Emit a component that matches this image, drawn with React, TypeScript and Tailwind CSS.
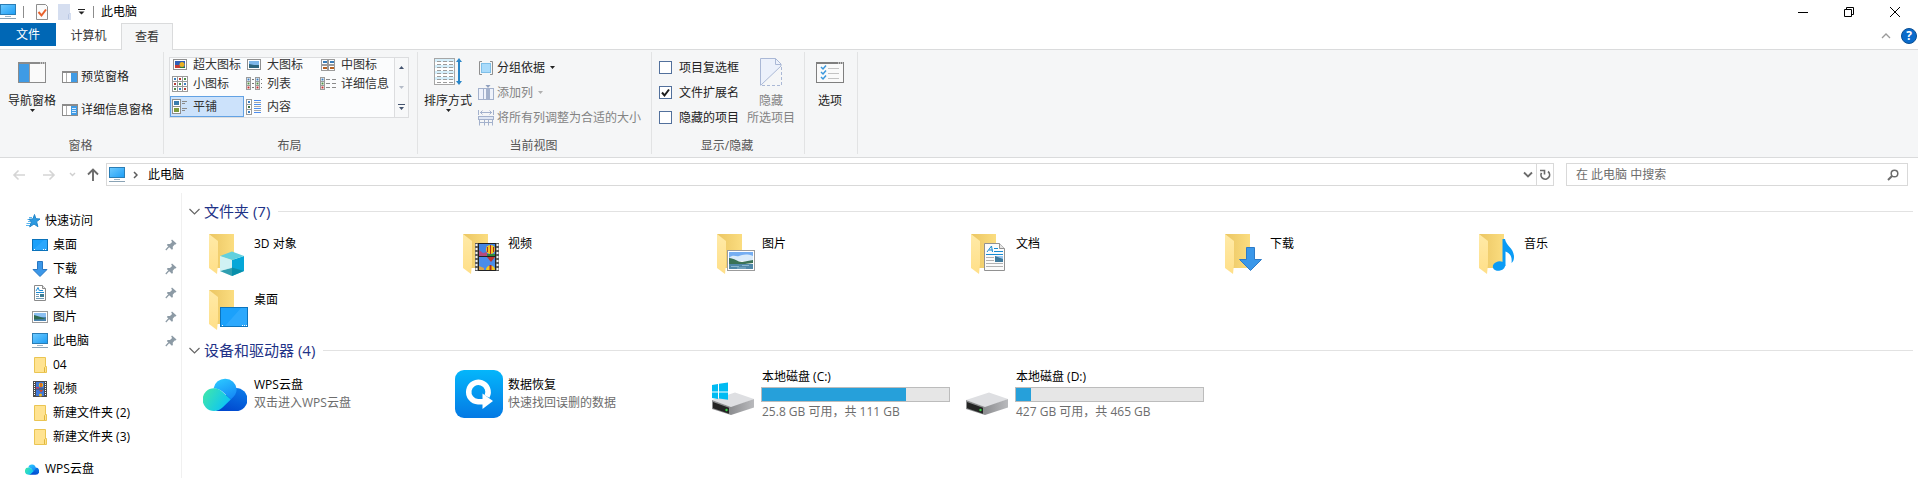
import { useState } from "react";
import type { ReactNode } from "react";

type IconProps = { className?: string };

/* ---------- icons ---------- */

function ComputerIcon({ className = "w-4 h-4" }: IconProps) {
  return (
    <svg viewBox="0 0 16 16" className={`shrink-0 ${className}`}>
      <defs>
        <linearGradient id="screen" x1="0" y1="0" x2="1" y2="1">
          <stop offset="0" stopColor="#6fcbff" />
          <stop offset="1" stopColor="#1c9df5" />
        </linearGradient>
      </defs>
      <rect x="0.5" y="0.5" width="15" height="10" fill="url(#screen)" stroke="#2a7db5" />
      <rect x="5" y="12" width="6" height="1" fill="#9db4c5" />
      <rect x="0" y="14" width="16" height="1" fill="#8aa3b5" />
    </svg>
  );
}

function DesktopIcon({ className = "w-4 h-4" }: IconProps) {
  return (
    <svg viewBox="0 0 16 16" className={`shrink-0 ${className}`}>
      <rect x="0.5" y="2.5" width="15" height="11" fill="#1ba1fb" stroke="#0b72ba" />
      <path d="M1 13L12 3h3v10z" fill="#3aaeff" opacity="0.5" />
      <path d="M2 12.5h1M11 12.5h1M13 12.5h1" stroke="#fff" />
    </svg>
  );
}

function DownloadIcon({ className = "w-4 h-4" }: IconProps) {
  return (
    <svg viewBox="0 0 16 16" className={`shrink-0 ${className}`}>
      <path d="M5.5 0.5h5v8h4.5L8 15.5 1 8.5h4.5z" fill="#3b97e8" stroke="#2877c2" />
    </svg>
  );
}

function DocumentIcon({ className = "w-4 h-4" }: IconProps) {
  return (
    <svg viewBox="0 0 16 16" className={`shrink-0 ${className}`}>
      <path d="M2.5 0.5h8l3 3v12h-11z" fill="#fff" stroke="#8a8a8a" />
      <path d="M10.5 0.5v3h3" fill="#e8e8e8" stroke="#8a8a8a" />
      <path d="M4 6l2-3.5L7.5 6M8 5.5h3M4 7.5h8" fill="none" stroke="#1a8ad4" />
      <path d="M4 9.5h3M4 11.5h3M4 13.5h8" stroke="#6e9cb8" />
      <rect x="8" y="9" width="4" height="3" fill="#3e7c93" />
    </svg>
  );
}

function PictureIcon({ className = "w-4 h-4" }: IconProps) {
  return (
    <svg viewBox="0 0 16 16" className={`shrink-0 ${className}`}>
      <rect x="0.5" y="2.5" width="15" height="11" fill="#fff" stroke="#9a9a9a" />
      <rect x="2" y="4" width="12" height="4" fill="#8cc0f2" />
      <rect x="2" y="8" width="12" height="4" fill="#4a83b0" />
      <path d="M2 6l5 1.5 7 2.5-12 .5z" fill="#2f6b52" />
    </svg>
  );
}

function VideoIcon({ className = "w-4 h-4" }: IconProps) {
  return (
    <svg viewBox="0 0 16 16" className={`shrink-0 ${className}`}>
      <rect x="1" y="0" width="14" height="16" fill="#4b4b4b" />
      <path d="M2.5 1v14M13.5 1v14" stroke="#fff" strokeDasharray="1 1" />
      <rect x="4" y="1" width="8" height="6.5" fill="#3f78d8" />
      <rect x="4" y="8.5" width="8" height="6.5" fill="#3f78d8" />
      <circle cx="9" cy="4" r="2.2" fill="#f0b81f" />
      <path d="M9 2v4.5" stroke="#c32222" />
      <path d="M4 6h3v1.5H4z" fill="#bf3f6c" />
      <path d="M7 9h4l-2 2.5z" fill="#d3482a" />
      <circle cx="8.5" cy="14" r="1.5" fill="#f0b81f" />
    </svg>
  );
}

function SmallFolderIcon({ className = "w-4 h-4" }: IconProps) {
  return (
    <svg viewBox="0 0 16 16" className={`shrink-0 ${className}`}>
      <path d="M2.5 0.5h11v9h1v6h-12z" fill="#ffe391" stroke="#eac553" />
      <path d="M12.5 15V10.5l1-1" fill="none" stroke="#e0b63c" />
    </svg>
  );
}

function StarIcon() {
  return (
    <svg viewBox="0 0 16 16" className="w-4 h-4 shrink-0">
      <path d="M3 4.5h3M1.5 6.5h3M2 8.5h3M0.5 10.5h4M0 12.5h4" stroke="#58b4ee" />
      <path
        d="M8.5 1.5l1.3 4.2 4.2.3-3.4 2.7 1.3 5-3.9-2.7-4.3 2.9 1.7-5-2.4-2.7 4-.3z"
        fill="#2b9ae2"
        stroke="#1f84c9"
      />
    </svg>
  );
}

function PinIcon() {
  return (
    <svg viewBox="0 0 12 12" className="w-3 h-3 shrink-0">
      <path d="M7 .5l4.5 4-1 1-.8-.1-2 2.3.2 2.3-1 .8L1.8 6l.9-1 2.3.1 2.1-2-.9-1.6z" fill="#8c9aa5" />
      <path d="M4 7.5L.8 11" stroke="#8c9aa5" strokeWidth="1.2" />
    </svg>
  );
}

function CloudIcon({ className = "w-11 h-[33px]" }: IconProps) {
  return (
    <svg viewBox="0 0 44 33" className={`shrink-0 ${className}`}>
      <defs>
        <linearGradient id="cloudLeft" x1="0" y1="0.2" x2="1" y2="0.7">
          <stop offset="0" stopColor="#3fe6ac" />
          <stop offset="1" stopColor="#08c1fb" />
        </linearGradient>
        <linearGradient id="cloudTop" x1="0.3" y1="0" x2="0.8" y2="1">
          <stop offset="0" stopColor="#2bc6ff" />
          <stop offset="1" stopColor="#1487f6" />
        </linearGradient>
        <linearGradient id="cloudRight" x1="0.8" y1="0" x2="0.4" y2="1">
          <stop offset="0" stopColor="#0b7be9" />
          <stop offset="1" stopColor="#0049cf" />
        </linearGradient>
      </defs>
      <path d="M33 10a11.5 11.5 0 010 23H13l12-20c2-2 5-3 8-3z" fill="url(#cloudRight)" />
      <path d="M10.5 10.5a11.7 11.7 0 0123.2.7c0 4-2.3 7-5.7 10.1l-9-8c-2-1.8-5-2.9-8.5-2.8z" fill="url(#cloudTop)" />
      <path d="M11 10.3c3.5 0 6 1.3 8 3.2l8.8 8-8 7.8c-2.4 2.4-5 3.7-8.8 3.7a11.3 11.3 0 010-22.7z" fill="url(#cloudLeft)" />
    </svg>
  );
}

function RecoveryIcon() {
  return (
    <svg viewBox="0 0 48 48" className="w-12 h-12">
      <defs>
        <linearGradient id="recovery" x1="0" y1="0" x2="0" y2="1">
          <stop offset="0" stopColor="#04b6fb" />
          <stop offset="1" stopColor="#0479e4" />
        </linearGradient>
      </defs>
      <rect width="48" height="48" rx="9" fill="url(#recovery)" />
      <path d="M32 26.5A9.7 9.7 0 1023 31.7h5" fill="none" stroke="#fff" strokeWidth="5.5" />
      <path d="M27.5 23.5l10.5 7.5-10.5 8z" fill="#fff" />
    </svg>
  );
}

function DriveIcon({ system }: { system?: boolean }) {
  return (
    <svg viewBox="0 5 48 48" className="w-12 h-12">
      <defs>
        <linearGradient id="driveSide" x1="0" y1="0" x2="1" y2="0">
          <stop offset="0" stopColor="#8e8f92" />
          <stop offset="1" stopColor="#b9babd" />
        </linearGradient>
      </defs>
      <path d="M3 35l23-7.5L45 34 23 42.5z" fill="#dedfe2" />
      <path d="M22 42l23-8v8.5L22 50z" fill="url(#driveSide)" />
      <path d="M3 35l19 7v8L3 44z" fill="#8d8e90" />
      <path d="M4 37l16 5.7v6L4 43.3z" fill="#242424" />
      <circle cx="17.5" cy="45" r="1.2" fill="#36d845" />
      {system && (
        <path
          d="M3 20l6-1v7.5H3zM10 18.8l9-1.3v9h-9zM3 27.5h6V34l-6-1zM10 27.5h9v7.3l-9-1.3z"
          fill="#00bbf2"
        />
      )}
    </svg>
  );
}

function FolderIcon({ children }: { children: ReactNode }) {
  return (
    <svg viewBox="0 0 48 48" className="w-12 h-12">
      <defs>
        <linearGradient id="folderBack" x1="0" y1="0" x2="1" y2="0">
          <stop offset="0" stopColor="#ebc663" />
          <stop offset="1" stopColor="#fbdd80" />
        </linearGradient>
        <linearGradient id="folderFront" x1="0" y1="0" x2="0" y2="1">
          <stop offset="0" stopColor="#ffeaa7" />
          <stop offset="1" stopColor="#ffdf88" />
        </linearGradient>
      </defs>
      <path d="M8 3h25v34H14z" fill="url(#folderBack)" />
      <path d="M8 3l9 7v23l-1 10-8-6z" fill="url(#folderFront)" />
      {children}
    </svg>
  );
}

const cubeBadge = (
  <g>
    <path d="M19 25l12 4v16l-12-5z" fill="#c3eff2" />
    <path d="M31 29l12-4v15l-12 5z" fill="#05a7d8" />
    <path d="M19 25l12-4.5L43 25l-12 4z" fill="#62d0de" />
    <path d="M19 40l12-3.5L43 40l-12 5z" fill="#0a8a9f" opacity="0.8" />
    <path d="M31 29v8l-12 3V25z" fill="#d5f3f5" opacity="0.7" />
  </g>
);

const videoBadge = (
  <g>
    <rect x="20" y="12" width="24" height="28" fill="#5b5b5b" />
    <path d="M21.5 13v27M42.5 13v27" stroke="#f4f4f4" strokeWidth="2" strokeDasharray="2 2" />
    <rect x="23" y="12" width="18" height="28" fill="#222" />
    <rect x="24" y="13" width="16" height="12" fill="#4384e2" />
    <rect x="24" y="26" width="16" height="13" fill="#4b8ce9" />
    <path d="M24 19l4 3 4-1v4h-8z" fill="#b54b80" />
    <path d="M32 23h8v2h-8z" fill="#2f8b3d" />
    <circle cx="35.5" cy="18.5" r="4.5" fill="#f4c81f" />
    <path d="M35.5 14v9M32.5 16v5M38.5 16v5" stroke="#b02a22" />
    <path d="M32 26h8l-4 5z" fill="#bf3430" />
    <path d="M31 39c0-6 9-6 9 0z" fill="#f4c81f" />
    <path d="M35.5 34v5" stroke="#b02a22" strokeWidth="2" />
    <path d="M24 35l5 2v2h-5z" fill="#d8a34e" />
  </g>
);

const pictureBadge = (
  <g>
    <rect x="18.5" y="19.5" width="27" height="20" fill="#fff" stroke="#9b9b9b" />
    <rect x="20" y="21" width="24" height="9" fill="#75aef2" />
    <path d="M20 27c4-4 7-1 10-2s7-3 14 0v5H20z" fill="#d9ebfa" />
    <path d="M20 27c5 0 9 4 13 4l11-2v3l-24 3z" fill="#3a7256" />
    <rect x="20" y="33" width="24" height="5" fill="#4f88a9" />
    <path d="M22 35.5h8M33 34.5h7M28 37h9" stroke="#a5cbdc" strokeWidth="0.7" />
  </g>
);

const documentBadge = (
  <g>
    <path d="M21.5 12.5h15l5 5v22h-20z" fill="#fbfbfb" stroke="#919191" />
    <path d="M36.5 12.5v5h5" fill="#e5e5e5" stroke="#919191" />
    <path d="M24 21l4.5-6 1 6M26 19h3.5M31 17.5h4M31 20.5h9" fill="none" stroke="#168bd2" />
    <path d="M23 23.5h17" stroke="#168bd2" />
    <path d="M23 26.5h8M23 29.5h8M23 32.5h17M23 35.5h17" stroke="#b2b2b2" />
    <rect x="32" y="25" width="8" height="6" fill="#3f7a9c" />
    <path d="M32 25h8v3z" fill="#9bc7ee" />
  </g>
);

const downloadBadge = (
  <path d="M29.5 16.5h8v12h7L33.5 39.5 22.5 28.5h7z" fill="#3a97e9" stroke="#2d7bc8" />
);

const musicBadge = (
  <g fill="#0a9bf5">
    <ellipse cx="28" cy="35" rx="6.3" ry="4.7" transform="rotate(-14 28 35)" />
    <path d="M31.5 8H34c1 7 9 9 9 18 0 3-1 5-2.5 6 1-7-2-10-6-11.5V35h-3z" />
  </g>
);

const desktopBadge = (
  <g>
    <rect x="19.5" y="20.5" width="27" height="19" fill="#1ba1fb" stroke="#0c74bd" />
    <path d="M24 39L40 21h6v18z" fill="#3fb1ff" opacity="0.5" />
    <path d="M21 38.5h1M41 38.5h1M43 38.5h1M45 38.5h1" stroke="#fff" />
  </g>
);

function Caret({ color = "#222" }: { color?: string }) {
  return (
    <svg viewBox="0 0 5 3" className="w-[5px] h-[3px] shrink-0">
      <path d="M0 0h5L2.5 3z" fill={color} />
    </svg>
  );
}

function PaneIcon({ kind }: { kind: "preview" | "details" }) {
  return (
    <svg viewBox="0 0 16 12" className="w-4 h-3 shrink-0">
      <rect x="0.5" y="0.5" width="15" height="11" fill="#fff" stroke="#8b8b8b" />
      <rect x="0" y="0" width="16" height="2" fill="#8b8b8b" />
      <path d="M4.5 2v9" stroke="#b0b0b0" />
      <rect x="9" y="2" width="6" height="9" fill="#3f9be5" />
      {kind === "details" && <path d="M10 4.5h4M10 6.5h4M10 8.5h4" stroke="#d4eaff" />}
    </svg>
  );
}

function NavPaneIcon() {
  return (
    <svg viewBox="0 0 28 21" className="w-7 h-[21px]">
      <rect x="0.5" y="0.5" width="27" height="20" fill="#fafafa" stroke="#8b8b8b" />
      <rect x="0" y="0" width="28" height="2" fill="#8b8b8b" />
      <path d="M22 1h1M24 1h1M26 1h1" stroke="#fff" />
      <rect x="1" y="2" width="10" height="18" fill="#3f9be5" />
      <path d="M11.5 2v18" stroke="#9a9a9a" />
    </svg>
  );
}

function SortIcon() {
  return (
    <svg viewBox="0 0 28 28" className="w-7 h-7">
      <rect x="0.5" y="0.5" width="20" height="26" fill="#fff" stroke="#a6a6a6" />
      <path d="M1 2.5h19M1 8.5h19M1 14.5h19M1 20.5h19" stroke="#d5effb" strokeWidth="3" />
      <path
        d="M3 3.5h16M3 6.5h16M3 9.5h16M3 12.5h16M3 15.5h16M3 18.5h16M3 21.5h16M3 24.5h16"
        stroke="#9c9c9c"
        strokeDasharray="4 2"
      />
      <path d="M25 2v23" stroke="#2a86c8" strokeWidth="2" />
      <path d="M22 4l3-4 3 4zM22 23l3 4 3-4z" fill="#2a86c8" />
    </svg>
  );
}

function GroupByIcon() {
  return (
    <svg viewBox="0 0 16 16" className="w-4 h-4 shrink-0">
      <path d="M4 1.5H1.5v13H4M12 1.5h2.5v13H12" fill="none" stroke="#8f8f8f" />
      <rect x="3.5" y="3.5" width="9" height="9" fill="#a9dbfb" stroke="#7fbfe8" />
    </svg>
  );
}

function AddColumnIcon() {
  return (
    <svg viewBox="0 0 16 16" className="w-4 h-4 shrink-0">
      <rect x="0.5" y="3.5" width="15" height="11" fill="#eef2fb" stroke="#a3b1cc" />
      <path d="M5.5 4v10M11.5 4v10" stroke="#a3b1cc" />
      <rect x="8" y="4" width="4" height="10" fill="#a3b1cc" />
      <path d="M7.5 0h5L10 3z" fill="#8fa0bf" />
    </svg>
  );
}

function FitColumnsIcon() {
  return (
    <svg viewBox="0 0 16 16" className="w-4 h-4 shrink-0">
      <path
        d="M0.5 0v5M15.5 0v5M2 2.5h12M4.5 0.5l-2 2 2 2M11.5 0.5l2 2-2 2"
        fill="none"
        stroke="#a3b1cc"
      />
      <rect x="0.5" y="6.5" width="15" height="3" fill="#dfe6f3" stroke="#a3b1cc" />
      <path d="M1.5 9v6.5M6.5 9v6.5M10.5 9v6.5M14.5 9v6.5M1 12.5h14" stroke="#a3b1cc" />
    </svg>
  );
}

function HideIcon() {
  return (
    <svg viewBox="0 0 22 28" className="w-[22px] h-7">
      <path d="M0.5 0.5h15l5.5 5.5v1.5L1 27z" fill="#ecf1fb" />
      <path d="M0.5 27V0.5h15l5.5 5.5v2L0.5 27.5" fill="none" stroke="#aab8d6" />
      <path d="M15.5 0.5v6H21" fill="none" stroke="#aab8d6" />
      <path d="M21.5 9v18.5H1" fill="none" stroke="#aab8d6" strokeDasharray="3 2" />
    </svg>
  );
}

function OptionsIcon() {
  return (
    <svg viewBox="0 0 28 21" className="w-7 h-[21px]">
      <rect x="0.5" y="0.5" width="27" height="20" fill="#fafafa" stroke="#7f7f7f" />
      <rect x="0" y="0" width="28" height="2" fill="#7f7f7f" />
      <path d="M22 1h1M24 1h1M26 1h1" stroke="#fff" />
      <path
        d="M5 5l2 2 3-3.5M5 10l2 2 3-3.5M5 15l2 2 3-3.5"
        fill="none"
        stroke="#3c98dc"
        strokeWidth="1.5"
      />
      <path d="M12 6.5h11M12 11.5h11M12 16.5h11" stroke="#c3c3c3" />
    </svg>
  );
}

type ViewKind = "xlarge" | "large" | "medium" | "small" | "list" | "details" | "tiles" | "content";

function Dot({ x, y, w = 4, color }: { x: number; y: number; w?: number; color: string }) {
  return (
    <g>
      <rect x={x + 0.5} y={y + 0.5} width={w} height={w} fill="#fff" stroke="#9b9b9b" />
      <rect x={x + w / 2 - 0.5} y={y + w / 2 - 0.5} width="2" height="2" fill={color} />
    </g>
  );
}

function ViewIcon({ kind }: { kind: ViewKind }) {
  return (
    <svg viewBox="0 0 16 16" className="w-4 h-4 shrink-0">
      {kind === "xlarge" && (
        <>
          <rect x="1.5" y="2.5" width="13" height="10" fill="#fff" stroke="#8f8f8f" />
          <rect x="3" y="4" width="10" height="7" fill="#2f5fb8" />
          <path d="M3 8h5v3H3z" fill="#c43d35" />
          <circle cx="10" cy="7.5" r="2.5" fill="#e9b022" />
          <path d="M8 10h5v1H8z" fill="#2f7b34" />
        </>
      )}
      {kind === "large" && (
        <>
          <rect x="1.5" y="2.5" width="13" height="10" fill="#fff" stroke="#8f8f8f" />
          <rect x="3" y="4" width="10" height="7" fill="#7db6e8" />
          <path d="M3 7l5 1h5v3H3z" fill="#2e657c" />
        </>
      )}
      {kind === "medium" &&
        [1, 8].map((x) =>
          [2, 8].map((y) => (
            <g key={`${x}-${y}`}>
              <rect x={x + 0.5} y={y + 0.5} width="6" height="5" fill="#fff" stroke="#9b9b9b" />
              <rect x={x + 2} y={y + 2} width="4" height="2" fill={y === 2 ? "#3a7cb8" : "#b76020"} />
            </g>
          ))
        )}
      {kind === "small" &&
        [0, 5, 10].map((x, i) =>
          [0, 5, 10].map((y, j) => (
            <Dot key={`${x}-${y}`} x={x} y={y} w={5} color={["#3c7fc0", "#b43c36", "#4f8d45"][(i + j) % 3]} />
          ))
        )}
      {(kind === "list" || kind === "details") && (
        <>
          <Dot x={0} y={1} color="#3c7fc0" />
          <Dot x={0} y={5} color="#4f8d45" />
          <Dot x={0} y={9} color="#c43131" />
        </>
      )}
      {kind === "list" && (
        <>
          <Dot x={9} y={1} color="#3c7fc0" />
          <Dot x={9} y={5} color="#4f8d45" />
          <Dot x={9} y={9} color="#c43131" />
          <path d="M6 3.5h2M6 7.5h2M6 11.5h2M15 3.5h1M15 7.5h1M15 11.5h1" stroke="#777" />
        </>
      )}
      {kind === "details" && (
        <path d="M6 3.5h4M6 7.5h4M6 11.5h4M12 3.5h4M12 7.5h4M12 11.5h4" stroke="#8a8a8a" />
      )}
      {kind === "tiles" && (
        <>
          <rect x="0.5" y="0.5" width="8" height="7" fill="#fff" stroke="#8f8f8f" />
          <rect x="2" y="2" width="5" height="4" fill="#397cae" />
          <rect x="0.5" y="7.5" width="8" height="7" fill="#fff" stroke="#8f8f8f" />
          <rect x="2" y="9" width="5" height="4" fill="#7d9b3c" />
          <path d="M10 2.5h5M10 4.5h3M10 9.5h5M10 11.5h3" stroke="#8a8a8a" />
        </>
      )}
      {kind === "content" && (
        <>
          <Dot x={0} y={0} w={5} color="#3c7fc0" />
          <Dot x={0} y={5} w={5} color="#39703b" />
          <Dot x={0} y={10} w={5} color="#3c7fc0" />
          <path d="M8 1.5h7M8 5.5h7M8 9.5h7M8 13.5h7" stroke="#4b8df0" />
          <path d="M8 3.5h7M8 7.5h7M8 11.5h7" stroke="#a5a5a5" />
        </>
      )}
    </svg>
  );
}

/* ---------- window chrome ---------- */

function TitleBar() {
  return (
    <header className="flex h-[23px] items-center justify-between">
      <div className="flex items-center">
        <ComputerIcon />
        <span className="ml-[7px] h-3 w-px bg-[#8c8c8c]" />
        <button type="button" aria-label="属性" className="ml-2.5">
          <svg viewBox="0 0 16 16" className="w-4 h-4">
            <path d="M2.5 0.5h9l2 2v13h-11z" fill="#fbfbfb" stroke="#8d8d8d" />
            <path d="M4.5 8l3 3.5 4.5-6" fill="none" stroke="#e8612c" strokeWidth="2" />
          </svg>
        </button>
        <button type="button" aria-label="新建文件夹" className="ml-1.5">
          <svg viewBox="0 0 16 16" className="w-4 h-4">
            <path d="M2 0h12v9h1v7H2z" fill="#d5def0" />
            <path d="M12.5 15V10.5l1-1" fill="none" stroke="#b9c7e2" />
          </svg>
        </button>
        <button type="button" aria-label="自定义快速访问工具栏" className="ml-1.5">
          <svg viewBox="0 0 7 6" className="w-[7px] h-1.5">
            <path d="M0 0h7v1H0zM0.5 2.5h6l-3 3z" fill="#222" />
          </svg>
        </button>
        <span className="ml-2 h-3 w-px bg-[#8c8c8c]" />
        <h1 className="ml-[7px]">此电脑</h1>
      </div>
      <div className="flex items-center gap-[34px] pr-[17px]">
        <button type="button" aria-label="最小化">
          <svg viewBox="0 0 12 12" className="w-3 h-3">
            <path d="M1 6.5h10" stroke="#000" />
          </svg>
        </button>
        <button type="button" aria-label="还原">
          <svg viewBox="0 0 12 12" className="w-3 h-3">
            <path d="M1.5 3.5h7v7h-7zM3.5 3V1.5h7v7H9" fill="none" stroke="#000" />
          </svg>
        </button>
        <button type="button" aria-label="关闭">
          <svg viewBox="0 0 12 12" className="w-3 h-3">
            <path d="M1 1l10 10M11 1L1 11" stroke="#000" />
          </svg>
        </button>
      </div>
    </header>
  );
}

function TabBar() {
  return (
    <nav className="flex h-[27px] items-start border-b border-[#dadbdc]">
      <button type="button" className="h-[23px] w-14 bg-[#0067b5] text-white">
        文件
      </button>
      <button type="button" className="h-[25px] w-[65px] text-[#333]">
        计算机
      </button>
      <button
        type="button"
        className="h-[27px] w-[52px] border border-b-0 border-[#dadbdc] bg-[#f5f6f7] text-[#333]"
      >
        查看
      </button>
      <div className="ml-auto flex items-center gap-2.5 pt-[5px] pr-px">
        <button type="button" aria-label="最小化功能区">
          <svg viewBox="0 0 10 6" className="w-2.5 h-1.5">
            <path d="M1 5l4-4 4 4" fill="none" stroke="#9a9a9a" strokeWidth="1.3" />
          </svg>
        </button>
        <button
          type="button"
          aria-label="帮助"
          className="h-4 w-4 rounded-full border border-[#0a4f93] bg-[#0a6bcb] text-center font-bold leading-[14px] text-white"
        >
          ?
        </button>
      </div>
    </nav>
  );
}

/* ---------- ribbon ---------- */

function RibbonGroup({
  label,
  className,
  children,
}: {
  label?: string;
  className: string;
  children: ReactNode;
}) {
  return (
    <section className={`flex h-[102px] flex-col border-r border-[#e2e3e4] ${className}`}>
      <div className="flex flex-1 items-start">{children}</div>
      <div className="h-4 pr-0.5 text-center leading-4 text-[#555]">{label}</div>
    </section>
  );
}

function LargeButton({
  icon,
  lines,
  caret,
  disabled,
}: {
  icon: ReactNode;
  lines: string[];
  caret?: boolean;
  disabled?: boolean;
}) {
  return (
    <button
      type="button"
      disabled={disabled}
      className={`flex shrink-0 flex-col items-center pt-1.5 ${
        disabled ? "text-[#838383]" : "text-[#222]"
      }`}
    >
      <span className="mb-1.5 flex h-7 items-center">{icon}</span>
      {lines.map((line) => (
        <span key={line} className="leading-[17px]">
          {line}
        </span>
      ))}
      {caret && <Caret />}
    </button>
  );
}

const views: { kind: ViewKind; name: string }[] = [
  { kind: "xlarge", name: "超大图标" },
  { kind: "large", name: "大图标" },
  { kind: "medium", name: "中图标" },
  { kind: "small", name: "小图标" },
  { kind: "list", name: "列表" },
  { kind: "details", name: "详细信息" },
  { kind: "tiles", name: "平铺" },
  { kind: "content", name: "内容" },
];

function ViewGallery() {
  const [selected, setSelected] = useState<ViewKind>("tiles");

  return (
    <div className="mt-[5px] flex border border-[#dcdddf] bg-[#fbfcfd]">
      <div className="grid grid-cols-[74px_74px_76px] grid-rows-[14px_24px_21px]">
        {views.map((view) => (
          <button
            key={view.kind}
            type="button"
            onClick={() => setSelected(view.kind)}
            className={`flex items-center gap-[5px] border pl-px leading-3 whitespace-nowrap text-[#333] ${
              selected === view.kind
                ? "border-[#62a2e4] bg-[#cce2fb]"
                : "border-transparent"
            }`}
          >
            <ViewIcon kind={view.kind} />
            {view.name}
          </button>
        ))}
      </div>
      <div className="flex w-[14px] flex-col border-l border-[#dcdddf] bg-[#f7f8f9]">
        <button type="button" aria-label="上一行" className="flex flex-1 items-center justify-center">
          <svg viewBox="0 0 5 3" className="w-[5px] h-[3px]">
            <path d="M0 3h5L2.5 0z" fill="#44546f" />
          </svg>
        </button>
        <button type="button" aria-label="下一行" className="flex flex-1 items-center justify-center">
          <Caret color="#b5bcc8" />
        </button>
        <button type="button" aria-label="更多" className="flex flex-1 items-center justify-center">
          <svg viewBox="0 0 7 6" className="w-[7px] h-1.5">
            <path d="M0 0h7v1H0zM1 3h5L3.5 6z" fill="#44546f" />
          </svg>
        </button>
      </div>
    </div>
  );
}

function RibbonCheckbox({ label, defaultChecked }: { label: string; defaultChecked?: boolean }) {
  return (
    <label className="flex h-[25px] items-center gap-[7px] whitespace-nowrap text-[#222]">
      <span className="relative h-[13px] w-[13px]">
        <input
          type="checkbox"
          defaultChecked={defaultChecked}
          className="peer block h-[13px] w-[13px] appearance-none border border-[#52709c] bg-white"
        />
        <svg
          viewBox="0 0 13 13"
          className="pointer-events-none absolute inset-0 hidden h-[13px] w-[13px] peer-checked:block"
        >
          <path d="M3 6.5l2.5 3 4.5-6" fill="none" stroke="#1c1c1c" strokeWidth="2" />
        </svg>
      </span>
      {label}
    </label>
  );
}

function Ribbon() {
  return (
    <div className="flex border-b border-[#dadbdc] bg-[#f5f6f7] pt-0.5 pb-[3px]">
      <RibbonGroup label="窗格" className="w-[164px]">
        <div className="flex gap-1.5 pl-2">
          <LargeButton icon={<NavPaneIcon />} lines={["导航窗格"]} caret />
          <div className="pt-2">
            <button type="button" className="flex h-[33px] items-center gap-[3px] text-[#222]">
              <PaneIcon kind="preview" />
              预览窗格
            </button>
            <button type="button" className="flex h-[33px] items-center gap-[3px] text-[#222]">
              <PaneIcon kind="details" />
              详细信息窗格
            </button>
          </div>
        </div>
      </RibbonGroup>

      <RibbonGroup label="布局" className="w-[254px]">
        <div className="pl-[5px]">
          <ViewGallery />
        </div>
      </RibbonGroup>

      <RibbonGroup label="当前视图" className="w-[234px]">
        <div className="flex gap-1.5 pl-1.5">
          <LargeButton icon={<SortIcon />} lines={["排序方式"]} caret />
          <div className="pt-[3px]">
            <button type="button" className="flex h-[25px] items-center gap-[3px] text-[#222]">
              <GroupByIcon />
              分组依据
              <span className="ml-0.5"><Caret /></span>
            </button>
            <button type="button" disabled className="flex h-[25px] items-center gap-[3px] text-[#838383]">
              <AddColumnIcon />
              添加列
              <span className="ml-0.5"><Caret color="#b0b0b0" /></span>
            </button>
            <button type="button" disabled className="flex h-[25px] items-center gap-[3px] text-[#838383]">
              <FitColumnsIcon />
              将所有列调整为合适的大小
            </button>
          </div>
        </div>
      </RibbonGroup>

      <RibbonGroup label="显示/隐藏" className="w-[153px]">
        <div className="flex gap-2 pl-[7px]">
          <div className="pt-[3px]">
            <RibbonCheckbox label="项目复选框" />
            <RibbonCheckbox label="文件扩展名" defaultChecked />
            <RibbonCheckbox label="隐藏的项目" />
          </div>
          <LargeButton icon={<HideIcon />} lines={["隐藏", "所选项目"]} disabled />
        </div>
      </RibbonGroup>

      <RibbonGroup className="w-[53px]">
        <div className="pl-[11px]">
          <LargeButton icon={<OptionsIcon />} lines={["选项"]} />
        </div>
      </RibbonGroup>
    </div>
  );
}

/* ---------- address bar ---------- */

function AddressBar() {
  return (
    <div className="flex items-center pt-[5px] pr-2.5">
      <div className="flex w-[106px] items-center pl-3">
        <button type="button" aria-label="返回" disabled>
          <svg viewBox="0 0 14 12" className="w-3.5 h-3">
            <path d="M13 6H2M6.5 1.5L2 6l4.5 4.5" fill="none" stroke="#d5d5d5" strokeWidth="1.6" />
          </svg>
        </button>
        <button type="button" aria-label="前进" disabled className="ml-4">
          <svg viewBox="0 0 14 12" className="w-3.5 h-3">
            <path d="M1 6h11M7.5 1.5L12 6l-4.5 4.5" fill="none" stroke="#d5d5d5" strokeWidth="1.6" />
          </svg>
        </button>
        <button type="button" aria-label="最近浏览的位置" disabled className="ml-[13px]">
          <svg viewBox="0 0 7 5" className="w-[7px] h-[5px]">
            <path d="M1 1l2.5 2.5L6 1" fill="none" stroke="#cfcfcf" strokeWidth="1.4" />
          </svg>
        </button>
        <button type="button" aria-label="上移" className="ml-2.5">
          <svg viewBox="0 0 14 14" className="w-3.5 h-3.5">
            <path d="M7 13V2M2 6.5l5-5 5 5" fill="none" stroke="#6b6b6b" strokeWidth="1.9" />
          </svg>
        </button>
      </div>
      <div className="flex h-[23px] flex-1 items-center border border-[#d9d9d9] pl-0.5">
        <ComputerIcon />
        <svg viewBox="0 0 5 8" className="ml-2 h-2 w-[5px]">
          <path d="M1 1l3 3-3 3" fill="none" stroke="#5c5c5c" strokeWidth="1.5" />
        </svg>
        <button type="button" className="ml-2.5">此电脑</button>
        <button type="button" aria-label="以前的位置" className="ml-auto mr-[3px]">
          <svg viewBox="0 0 10 7" className="w-2.5 h-[7px]">
            <path d="M1 1.5l4 4 4-4" fill="none" stroke="#6b6b6b" strokeWidth="1.8" />
          </svg>
        </button>
        <button
          type="button"
          aria-label="刷新"
          className="flex h-full w-[17px] items-center justify-center border-l border-[#d9d9d9]"
        >
          <svg viewBox="0 0 12 12" className="w-3 h-3">
            <path d="M9 2.5A4.3 4.3 0 112.5 3.8" fill="none" stroke="#6b6b6b" strokeWidth="1.7" />
            <path d="M1 1.5h4.5v4" fill="none" stroke="#6b6b6b" strokeWidth="1.6" />
          </svg>
        </button>
      </div>
      <div className="ml-3 flex h-[23px] w-[342px] items-center border border-[#d9d9d9] pr-2 pl-[9px]">
        <input
          type="text"
          aria-label="搜索"
          placeholder="在 此电脑 中搜索"
          className="min-w-0 flex-1 bg-transparent outline-none placeholder:text-[#6d6d6d]"
        />
        <svg viewBox="0 0 12 12" className="w-3 h-3">
          <circle cx="7.5" cy="4.5" r="3.3" fill="none" stroke="#6b6b6b" strokeWidth="1.5" />
          <path d="M5 7L1 11" stroke="#6b6b6b" strokeWidth="1.9" />
        </svg>
      </div>
    </div>
  );
}

/* ---------- body ---------- */

const quickAccess: { name: string; icon: ReactNode; pinned?: boolean }[] = [
  { name: "桌面", icon: <DesktopIcon />, pinned: true },
  { name: "下载", icon: <DownloadIcon />, pinned: true },
  { name: "文档", icon: <DocumentIcon />, pinned: true },
  { name: "图片", icon: <PictureIcon />, pinned: true },
  { name: "此电脑", icon: <ComputerIcon />, pinned: true },
  { name: "04", icon: <SmallFolderIcon /> },
  { name: "视频", icon: <VideoIcon /> },
  { name: "新建文件夹 (2)", icon: <SmallFolderIcon /> },
  { name: "新建文件夹 (3)", icon: <SmallFolderIcon /> },
];

function Sidebar() {
  return (
    <aside className="w-[182px] shrink-0 border-r border-[#f0f0f0] pt-4">
      <a href="#quick" className="flex h-6 items-center gap-[3px] pl-[26px]">
        <StarIcon />
        快速访问
      </a>
      <ul>
        {quickAccess.map((item) => (
          <li key={item.name}>
            <a href="#item" className="flex h-6 items-center gap-[5px] pr-1 pl-8">
              {item.icon}
              <span className="flex-1">{item.name}</span>
              {item.pinned && <PinIcon />}
            </a>
          </li>
        ))}
      </ul>
      <a href="#wps" className="mt-2 flex h-6 items-center gap-1.5 pl-[25px]">
        <CloudIcon className="w-3.5 h-[11px]" />
        WPS云盘
      </a>
    </aside>
  );
}

const folders: { name: string; badge: ReactNode }[] = [
  { name: "3D 对象", badge: cubeBadge },
  { name: "视频", badge: videoBadge },
  { name: "图片", badge: pictureBadge },
  { name: "文档", badge: documentBadge },
  { name: "下载", badge: downloadBadge },
  { name: "音乐", badge: musicBadge },
  { name: "桌面", badge: desktopBadge },
];

const drives = [
  { name: "本地磁盘 (C:)", info: "25.8 GB 可用，共 111 GB", used: 77, system: true },
  { name: "本地磁盘 (D:)", info: "427 GB 可用，共 465 GB", used: 8, system: false },
];

function SectionHeader({ title }: { title: string }) {
  return (
    <div className="flex h-6 items-center pr-[5px] pl-[7px]">
      <svg viewBox="0 0 11 7" className="w-[11px] h-[7px]">
        <path d="M0.5 1l5 5 5-5" fill="none" stroke="#666" strokeWidth="1.2" />
      </svg>
      <h2 className="ml-1 text-[15px] leading-6 text-[#1e3287]">{title}</h2>
      <span className="ml-2 h-px flex-1 bg-[#e2e2e2]" />
    </div>
  );
}

function DeviceTile({ icon, name, info }: { icon: ReactNode; name: string; info: string }) {
  return (
    <li className="flex h-14 gap-1">
      <span className="flex h-12 w-12 items-center justify-center">{icon}</span>
      <div className="pt-1.5 pl-px leading-[18px]">
        <p>{name}</p>
        <p className="text-[#6d6d6d]">{info}</p>
      </div>
    </li>
  );
}

function Content() {
  return (
    <main className="min-w-0 flex-1 pt-1.5">
      <SectionHeader title="文件夹 (7)" />
      <ul className="mt-2 grid grid-cols-[repeat(auto-fill,254px)] pl-[19px]">
        {folders.map((folder) => (
          <li key={folder.name} className="flex h-14 gap-1">
            <FolderIcon>{folder.badge}</FolderIcon>
            <span className="pt-1 pl-px leading-[18px]">{folder.name}</span>
          </li>
        ))}
      </ul>

      <div className="-mt-[5px]">
        <SectionHeader title="设备和驱动器 (4)" />
      </div>
      <ul className="mt-2 grid grid-cols-[repeat(auto-fill,254px)] pl-[19px]">
        <DeviceTile icon={<CloudIcon />} name="WPS云盘" info="双击进入WPS云盘" />
        <DeviceTile icon={<RecoveryIcon />} name="数据恢复" info="快速找回误删的数据" />
        {drives.map((drive) => (
          <li key={drive.name} className="flex h-14 gap-1">
            <DriveIcon system={drive.system} />
            <div className="w-[189px]">
              <p className="h-[17px] pl-px leading-[14px]">{drive.name}</p>
              <div className="h-[15px] border border-[#bcbcbc] bg-[#e6e6e6]">
                <div className="h-full bg-[#26a0da]" style={{ width: `${drive.used}%` }} />
              </div>
              <p className="pl-px leading-5 text-[#6d6d6d]">{drive.info}</p>
            </div>
          </li>
        ))}
      </ul>
    </main>
  );
}

export default function App() {
  return (
    <div className="flex h-screen flex-col overflow-hidden bg-white font-['Open_Sans','Noto_Sans_CJK_SC',sans-serif] text-[12px] leading-4 text-black">
      <TitleBar />
      <TabBar />
      <Ribbon />
      <AddressBar />
      <div className="flex min-h-0 flex-1 pt-[7px]">
        <Sidebar />
        <Content />
      </div>
    </div>
  );
}
